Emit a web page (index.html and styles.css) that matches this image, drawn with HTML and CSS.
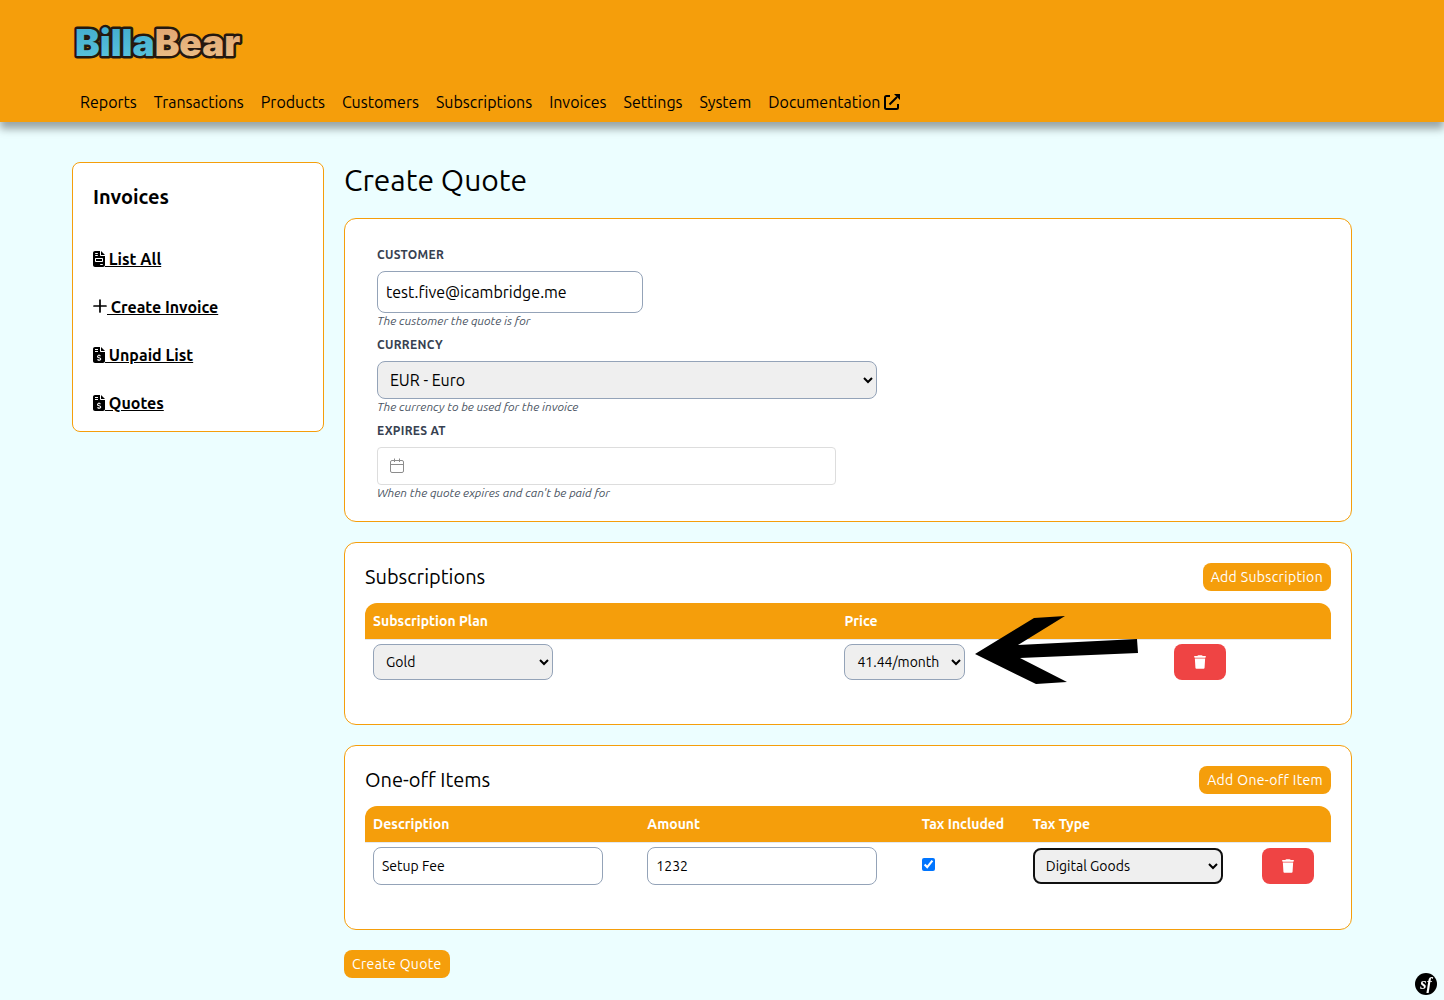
FILE: index.html
```html
<!DOCTYPE html>
<html lang="en">
<head>
    <meta charset="UTF-8">
    <meta name="viewport" content="width=device-width, initial-scale=1">
    <title>BillaBear - Create Quote</title>
    <link rel="stylesheet" href="styles.css">
</head>
<body>
    <header class="header">
        <div class="container">
            <a href="#" class="logo">
                <svg width="190" height="62" viewBox="0 0 190 62">
                    <defs>
                        <linearGradient id="blue" x1="0" y1="0" x2="0" y2="1">
                            <stop offset="0" stop-color="#3fa9cb"/>
                            <stop offset="1" stop-color="#5cc6de"/>
                        </linearGradient>
                        <linearGradient id="tan" x1="0" y1="0" x2="0" y2="1">
                            <stop offset="0" stop-color="#dfa06c"/>
                            <stop offset="1" stop-color="#ecc38b"/>
                        </linearGradient>
                    </defs>
                    <text class="logo-text" x="3" y="46"><tspan fill="url(#blue)">Billa</tspan><tspan fill="url(#tan)">Bear</tspan></text>
                </svg>
            </a>
            <nav class="nav">
                <a href="#">Reports</a>
                <a href="#">Transactions</a>
                <a href="#">Products</a>
                <a href="#">Customers</a>
                <a href="#">Subscriptions</a>
                <a href="#">Invoices</a>
                <a href="#">Settings</a>
                <a href="#">System</a>
                <a href="#" class="external">Documentation
                    <svg width="16" height="16" viewBox="0 0 16 16">
                        <path d="M6 2H2.500Q1 2 1 3.500V13.500Q1 15 2.500 15H12.500Q14 15 14 13.500V10" fill="none" stroke="#000" stroke-width="2"/>
                        <path d="M5.500 10.500L13 3" stroke="#000" stroke-width="2"/>
                        <path d="M10 0H16V6Z"/>
                    </svg>
                </a>
            </nav>
        </div>
    </header>

    <div class="container content">
        <aside class="sidebar">
            <h2>Invoices</h2>
            <ul>
                <li><a href="#"><svg width="12" height="16" viewBox="0 0 384 512"><path d="M64 0C28.700 0 0 28.700 0 64V448c0 35.300 28.700 64 64 64H320c35.300 0 64-28.700 64-64V160H256c-17.700 0-32-14.300-32-32V0H64zM256 0V128H384L256 0zM80 64h64c8.800 0 16 7.200 16 16s-7.200 16-16 16H80c-8.800 0-16-7.200-16-16s7.200-16 16-16zm0 64h64c8.800 0 16 7.200 16 16s-7.200 16-16 16H80c-8.800 0-16-7.200-16-16s7.200-16 16-16zm16 96H288c17.700 0 32 14.300 32 32v64c0 17.700-14.300 32-32 32H96c-17.700 0-32-14.300-32-32V256c0-17.700 14.300-32 32-32zm0 32v64H288V256H96zM240 416h64c8.800 0 16 7.200 16 16s-7.200 16-16 16H240c-8.800 0-16-7.200-16-16s7.200-16 16-16z" fill-rule="evenodd"/></svg> List All</a></li>
                <li><a href="#"><svg width="14" height="16" viewBox="0 0 14 16"><path d="M7 1V13M1 7H13" stroke="#000" stroke-width="1.700" stroke-linecap="round"/></svg> Create Invoice</a></li>
                <li><a href="#"><svg width="12" height="16" viewBox="0 0 384 512"><path d="M64 0C28.700 0 0 28.700 0 64V448c0 35.300 28.700 64 64 64H320c35.300 0 64-28.700 64-64V160H256c-17.700 0-32-14.300-32-32V0H64zM256 0V128H384L256 0zM64 64h96v32H64zM64 128h96v32H64z" fill-rule="evenodd"/><path d="M242 288c-30-22-98-22-98 20 0 50 104 22 104 74 0 44-76 42-108 18M192 240v34M192 416v34" fill="none" stroke="#fff" stroke-width="34"/></svg> Unpaid List</a></li>
                <li><a href="#"><svg width="12" height="16" viewBox="0 0 384 512"><path d="M64 0C28.700 0 0 28.700 0 64V448c0 35.300 28.700 64 64 64H320c35.300 0 64-28.700 64-64V160H256c-17.700 0-32-14.300-32-32V0H64zM256 0V128H384L256 0zM64 64h96v32H64zM64 128h96v32H64z" fill-rule="evenodd"/><path d="M242 288c-30-22-98-22-98 20 0 50 104 22 104 74 0 44-76 42-108 18M192 240v34M192 416v34" fill="none" stroke="#fff" stroke-width="34"/></svg> Quotes</a></li>
            </ul>
        </aside>

        <main class="main">
            <h1>Create Quote</h1>

            <section class="card">
                <div class="form">
                    <label for="customer">Customer</label>
                    <input type="text" id="customer" class="field customer" value="test.five@icambridge.me">
                    <p class="help">The customer the quote is for</p>

                    <label for="currency">Currency</label>
                    <select id="currency" class="field currency">
                        <option>EUR - Euro</option>
                    </select>
                    <p class="help">The currency to be used for the invoice</p>

                    <label for="expires">Expires At</label>
                    <div class="date">
                        <svg width="14" height="16" viewBox="0 0 14 16" fill="none" stroke="#8c8c8c">
                            <rect x="0.500" y="2.500" width="13" height="12" rx="1.500"/>
                            <path d="M0.500 6.500H13.500M4.500 0.500V4M9.500 0.500V4"/>
                        </svg>
                        <input type="text" id="expires">
                    </div>
                    <p class="help">When the quote expires and can't be paid for</p>
                </div>
            </section>

            <section class="card">
                <div class="card-head">
                    <h2>Subscriptions</h2>
                    <button type="button" class="btn">Add Subscription</button>
                </div>
                <table class="table">
                    <colgroup>
                        <col class="col-plan">
                        <col class="col-price">
                        <col>
                    </colgroup>
                    <thead>
                        <tr>
                            <th>Subscription Plan</th>
                            <th>Price</th>
                            <th></th>
                        </tr>
                    </thead>
                    <tbody>
                        <tr>
                            <td>
                                <select class="field plan" aria-label="Subscription Plan">
                                    <option>Gold</option>
                                </select>
                            </td>
                            <td class="price-cell">
                                <select class="field price" aria-label="Price">
                                    <option>41.44/month</option>
                                </select>
                                <svg class="arrow" width="164" height="68" viewBox="0 0 164 68">
                                    <path d="M0 38L59 2L90 0L43 29L162 23L163 37L45 42L92 66L61 68Z"/>
                                </svg>
                            </td>
                            <td>
                                <button type="button" class="btn-delete" aria-label="Delete">
                                    <svg width="12" height="14" viewBox="0 0 448 512"><path d="M135.200 17.700L128 32H32C14.300 32 0 46.300 0 64S14.300 96 32 96H416c17.700 0 32-14.300 32-32s-14.300-32-32-32H320l-7.200-14.300C307.400 6.800 296.300 0 284.200 0H163.800c-12.100 0-23.200 6.800-28.600 17.700zM416 128H32L53.200 467c1.600 25.300 22.600 45 47.900 45H346.900c25.300 0 46.300-19.700 47.900-45L416 128z"/></svg>
                                </button>
                            </td>
                        </tr>
                    </tbody>
                </table>
            </section>

            <section class="card">
                <div class="card-head">
                    <h2>One-off Items</h2>
                    <button type="button" class="btn">Add One-off Item</button>
                </div>
                <table class="table">
                    <colgroup>
                        <col class="col-item">
                        <col class="col-item">
                        <col class="col-tax">
                        <col class="col-type">
                        <col>
                    </colgroup>
                    <thead>
                        <tr>
                            <th>Description</th>
                            <th>Amount</th>
                            <th>Tax Included</th>
                            <th>Tax Type</th>
                            <th></th>
                        </tr>
                    </thead>
                    <tbody>
                        <tr>
                            <td><input type="text" class="field item" value="Setup Fee" aria-label="Description"></td>
                            <td><input type="text" class="field item" value="1232" aria-label="Amount"></td>
                            <td><input type="checkbox" class="check" checked aria-label="Tax Included"></td>
                            <td>
                                <select class="field type active" aria-label="Tax Type">
                                    <option>Digital Goods</option>
                                </select>
                            </td>
                            <td>
                                <button type="button" class="btn-delete" aria-label="Delete">
                                    <svg width="12" height="14" viewBox="0 0 448 512"><path d="M135.200 17.700L128 32H32C14.300 32 0 46.300 0 64S14.300 96 32 96H416c17.700 0 32-14.300 32-32s-14.300-32-32-32H320l-7.200-14.300C307.400 6.800 296.300 0 284.200 0H163.800c-12.100 0-23.200 6.800-28.600 17.700zM416 128H32L53.200 467c1.600 25.300 22.600 45 47.900 45H346.900c25.300 0 46.300-19.700 47.900-45L416 128z"/></svg>
                                </button>
                            </td>
                        </tr>
                    </tbody>
                </table>
            </section>

            <button type="button" class="btn">Create Quote</button>
        </main>
    </div>

    <button type="button" class="toolbar" aria-label="Show toolbar"><span>sf</span></button>
</body>
</html>
```
FILE: styles.css
```css
* {
    box-sizing: border-box;
    margin: 0;
    padding: 0;
}
body {
    font-family: Ubuntu, Roboto, sans-serif;
    font-size: 16px;
    line-height: 24px;
    color: #000;
    background-color: #ecfeff;
    padding-right: 20px;
    min-height: 100vh;
}
h1, h2 {
    font-weight: 400;
}
h1 {
    font-size: 30px;
    line-height: 36px;
}
h2 {
    font-size: 20px;
    line-height: 28px;
}
input, select, button {
    font-family: inherit;
    color: inherit;
}
.container {
    max-width: 1280px;
    margin: 0 auto;
}

/* header */
.header {
    background-color: #f59e0b;
    margin-right: -20px;
    padding: 10px 20px 0 0;
    box-shadow: 0 7px 8px rgba(0, 0, 0, 0.35);
}
.logo {
    display: block;
    height: 72px;
}
.logo svg {
    display: block;
}
.logo-text {
    font-family: Inter, sans-serif;
    font-size: 37px;
    font-weight: 900;
    stroke: #24180f;
    stroke-width: 5px;
    stroke-linejoin: round;
    paint-order: stroke;
}
.nav {
    display: flex;
    flex-wrap: wrap;
    gap: 1px;
}
.nav a {
    padding: 8px;
    color: #000;
    text-decoration: none;
}
.nav .external {
    display: flex;
    align-items: center;
    gap: 4px;
}

/* layout */
.content {
    display: flex;
    align-items: flex-start;
    gap: 20px;
    padding: 40px 0 20px;
}
.main {
    flex: 1;
    display: flex;
    flex-direction: column;
    align-items: flex-start;
    gap: 20px;
}

/* sidebar */
.sidebar {
    width: 252px;
    padding: 20px 20px 16px;
    background-color: #fff;
    border: 1px solid #f59e0b;
    border-radius: 8px;
}
.sidebar h2 {
    font-weight: 700;
    margin-bottom: 36px;
}
.sidebar ul {
    list-style: none;
    display: flex;
    flex-direction: column;
    gap: 24px;
}
.sidebar a {
    color: #000;
    font-weight: 700;
}
.sidebar svg {
    vertical-align: -2px;
}

/* cards */
.card {
    width: 100%;
    padding: 20px;
    background-color: #fff;
    border: 1px solid #f59e0b;
    border-radius: 12px;
}
.card-head {
    display: flex;
    justify-content: space-between;
    margin-bottom: 12px;
}

/* form */
.form {
    padding: 0 12px;
}
.form label {
    display: block;
    margin: 8px 0;
    font-size: 12px;
    line-height: 16px;
    font-weight: 700;
    letter-spacing: 0.025em;
    text-transform: uppercase;
    color: #374151;
}
.help {
    font-size: 12px;
    line-height: 16px;
    font-style: italic;
    color: #4b5563;
}
.field {
    display: block;
    height: 36px;
    padding: 0 8px;
    font-size: 14px;
    background-color: #fff;
    border: 1px solid #94a3b8;
    border-radius: 8px;
}
select.field {
    background-color: #efefef;
}
.customer {
    width: 266px;
    height: 42px;
    font-size: 16px;
}
.currency {
    width: 500px;
    height: 38px;
    font-size: 16px;
}
.date {
    position: relative;
    width: 459px;
}
.date svg {
    position: absolute;
    top: 11px;
    left: 13px;
}
.date input {
    display: block;
    width: 100%;
    height: 38px;
    padding: 0 12px 0 36px;
    font-size: 16px;
    border: 1px solid #ddd;
    border-radius: 4px;
}

/* tables */
.table {
    width: 100%;
    margin-bottom: 20px;
    table-layout: fixed;
    border-spacing: 0;
    font-size: 14px;
    line-height: 20px;
}
.col-plan {
    width: 48.8%;
}
.col-price {
    width: 34.1%;
}
.col-item {
    width: 28.4%;
}
.col-tax {
    width: 11.5%;
}
.col-type {
    width: 23.7%;
}
.table th {
    height: 37px;
    padding: 0 8px;
    text-align: left;
    font-weight: 700;
    color: #fff;
    background-color: #f59e0b;
    border-bottom: 1px solid #e2e8f0;
}
.table th:first-child {
    border-top-left-radius: 12px;
}
.table th:last-child {
    border-top-right-radius: 12px;
}
.table td {
    padding: 4px 8px;
    vertical-align: middle;
}
.plan {
    width: 180px;
}
.price {
    width: 121px;
}
.item {
    width: 230px;
    height: 38px;
}
.type {
    width: 190px;
}
.field.active {
    padding: 0 7px;
    border: 2px solid #101010;
}
.check {
    width: 13px;
    height: 13px;
}
.price-cell {
    position: relative;
}
.arrow {
    position: absolute;
    top: -24px;
    left: 139px;
}

/* buttons */
.btn {
    height: 28px;
    padding: 0 8px;
    font-size: 14px;
    line-height: 20px;
    letter-spacing: 0.025em;
    color: #fff;
    background-color: #f59e0b;
    border: none;
    border-radius: 8px;
    cursor: pointer;
}
.btn-delete {
    display: flex;
    align-items: center;
    justify-content: center;
    width: 52px;
    height: 36px;
    background-color: #ef4444;
    border: none;
    border-radius: 8px;
    cursor: pointer;
}
.btn-delete svg {
    fill: #fff;
}
.toolbar {
    position: fixed;
    right: 7px;
    bottom: 5px;
    width: 22px;
    height: 22px;
    font-family: "Liberation Serif", serif;
    font-size: 16px;
    font-style: italic;
    font-weight: 700;
    line-height: 18px;
    color: #fff;
    background-color: #000;
    border: none;
    border-radius: 50%;
}
```
